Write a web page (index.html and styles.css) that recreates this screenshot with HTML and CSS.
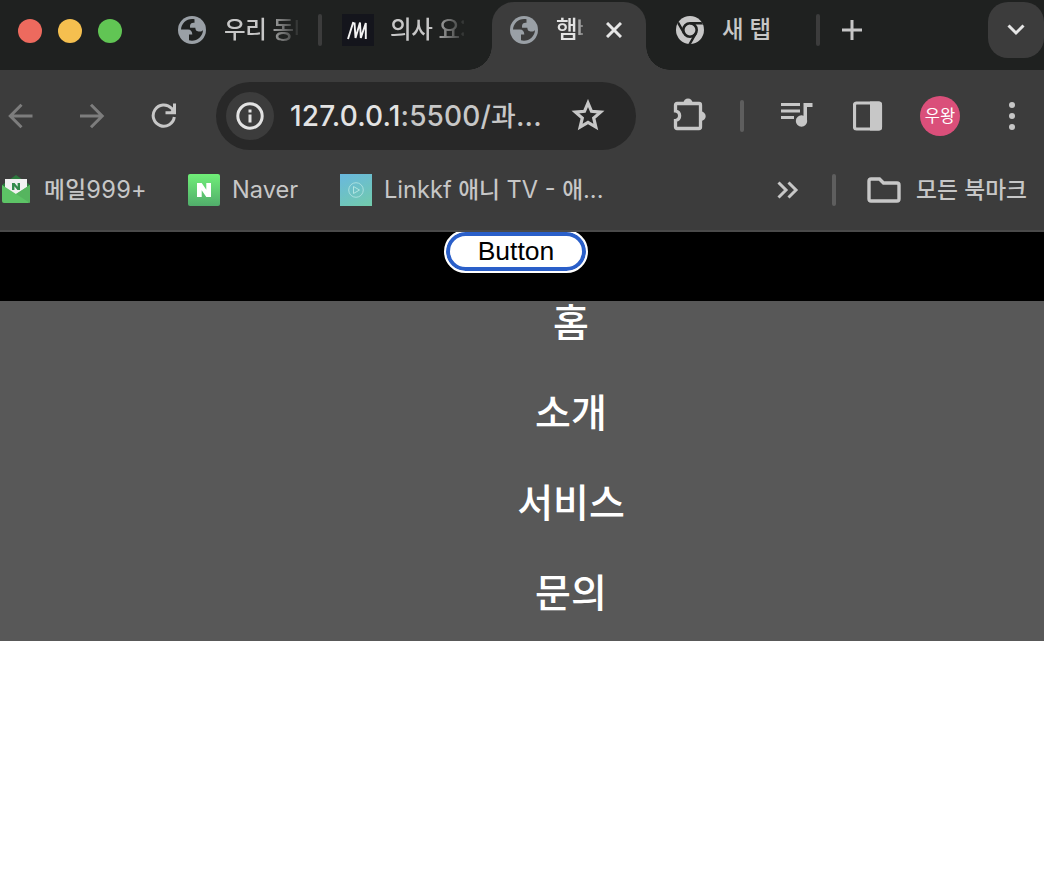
FILE: index.html
```html
<!DOCTYPE html>
<html lang="ko">
<head>
<meta charset="utf-8">
<title>햄버거 메뉴</title>
<link rel="stylesheet" href="styles.css">
</head>
<body>
<svg class="defs" width="0" height="0">
  <symbol id="globe" viewBox="0 0 28 28">
    <circle cx="14" cy="14" r="14" fill="#9aa0a6"/>
    <path d="M16.500 3.200C9.300 1.800 3.300 7 3 13.500h7c2.800 0 4.300 2 4.300 5H11v5.800c6.500 2 13.800-3 14-10.300-1 1.400-2.400 1.600-4.500 1.400-2.200-.2-3-1.400-3.200-3.700h-5.200c-.3-3.700.8-4.900 4.400-4.900z" fill="currentColor"/>
  </symbol>
</svg>
<header class="browser">
  <div class="tabs">
    <div class="lights"><i class="red"></i><i class="yellow"></i><i class="green"></i></div>
    <div class="tab first">
      <svg width="28" height="28"><use href="#globe"/></svg>
      <span class="title fade">우리 동네</span>
    </div>
    <i class="divider"></i>
    <div class="tab second">
      <svg width="32" height="32" viewBox="0 0 32 32"><path fill="#14151c" d="M0 0h32v32H0z"/><path d="M6 25L11.300 8M12.500 8.500L13.500 24L18 8.500L18.800 24L23.800 9V25" fill="none" stroke="#f4f4f4" stroke-width="1.900"/></svg>
      <span class="title fade">의사 요:</span>
    </div>
    <div class="tab active">
      <svg width="28" height="28"><use href="#globe"/></svg>
      <span class="title fade">햄버</span>
      <svg class="close" width="16" height="16" viewBox="0 0 16 16"><path d="M1 1l14 14M15 1L1 15" stroke="#e6e6e6" stroke-width="3"/></svg>
    </div>
    <div class="tab last">
      <svg width="28" height="28" viewBox="0 0 28 28"><defs><clipPath id="disc"><circle cx="14" cy="14" r="14"/></clipPath></defs><g clip-path="url(#disc)"><path d="M0 0h28v28H0z" fill="#c7c7c7"/><circle cx="14" cy="14" r="6.700" fill="none" stroke="#1f2120" stroke-width="2.600"/><path d="M14 7.300h14M8.200 17.400L1.200 5.200M19.800 17.400L13.400 28.500" stroke="#1f2120" stroke-width="2.400"/></g></svg>
      <span class="title">새 탭</span>
    </div>
    <i class="divider"></i>
    <svg class="plus" width="20" height="20" viewBox="0 0 20 20"><path d="M10 0v20M0 10h20" stroke="#c7c7c7" stroke-width="3"/></svg>
    <div class="tab-search"><svg width="18" height="12" viewBox="0 0 18 12"><path d="M1.500 1.500L9 9l7.500-7.500" fill="none" stroke="#e6e6e6" stroke-width="3"/></svg></div>
  </div>
  <div class="toolbar">
    <svg class="back" width="26" height="26" viewBox="0 0 26 26"><path d="M24.500 13H3M13.500 1.800L2.300 13l11.200 11.200" fill="none" stroke="#7d7d7d" stroke-width="3"/></svg>
    <svg class="forward" width="26" height="26" viewBox="0 0 26 26"><path d="M1 13h22M12 1.800L23.200 13 12 24.200" fill="none" stroke="#7d7d7d" stroke-width="3"/></svg>
    <svg class="reload" width="26" height="26" viewBox="0 0 26 26"><path d="M23.300 14A10.600 10.600 0 1 1 20.500 5.300L23 8" fill="none" stroke="#c7c7c7" stroke-width="3"/><path d="M25 .500v10.700H14.500V8.200h5L22 5.500v-5z" fill="#c7c7c7"/></svg>
    <div class="omnibox">
      <div class="info"><svg width="28" height="28" viewBox="0 0 28 28"><circle cx="14" cy="14" r="12.200" fill="none" stroke="#e3e3e3" stroke-width="3"/><path d="M12.500 12.500h3v8h-3zM12.500 7.500h3v3h-3z" fill="#e3e3e3"/></svg></div>
      <span class="url"><b>127.0.0.1</b>:5500/<span class="ko">과</span>...</span>
      <svg class="star" width="34" height="32" viewBox="0 0 34 32"><path d="M17 4l3.500 8.300 9.100.800-6.900 6 2.100 8.900L17 23.300 9.200 28l2.100-8.900-6.900-6 9.100-.800z" fill="none" stroke="#c7c7c7" stroke-width="3.200"/></svg>
    </div>
    <svg class="puzzle" width="34" height="34" viewBox="0 0 34 34"><path d="M4 5.500h22q1.500 0 1.500 1.500v22q0 1.500-1.500 1.500H4q-1.500 0-1.500-1.500v-6.500c5.500-1 5.500-8.500 0-9.500V7q0-1.500 1.500-1.500z" fill="none" stroke="#c7c7c7" stroke-width="3.300"/><path d="M10.500 5a4.500 4.500 0 0 1 9 0zM28 13.500a4.700 4.700 0 0 1 0 9.400z" fill="#c7c7c7"/></svg>
    <i class="divider light"></i>
    <svg class="music" width="32" height="26" viewBox="0 0 32 26"><path d="M0 2.500h19M0 9h19M0 15.500h13" stroke="#c7c7c7" stroke-width="3.200"/><circle cx="20.500" cy="19" r="5.700" fill="#c7c7c7"/><path d="M22.500 19V1H31.500v4H26V19z" fill="#c7c7c7"/></svg>
    <svg class="panel" width="30" height="30" viewBox="0 0 30 30"><rect x="1.500" y="2" width="26" height="26" rx="2" fill="none" stroke="#c7c7c7" stroke-width="3.200"/><path d="M17 .500h9q3 0 3 3v23q0 3-3 3h-9z" fill="#c7c7c7"/></svg>
    <div class="avatar">우왕</div>
    <svg class="dots" width="6" height="28" viewBox="0 0 6 28"><g fill="#c7c7c7"><circle cx="3" cy="3" r="3"/><circle cx="3" cy="14" r="3"/><circle cx="3" cy="25" r="3"/></g></svg>
  </div>
  <nav class="bookmarks">
    <svg class="mail" width="28" height="28" viewBox="0 0 28 28"><path d="M0 10L14 0l14 10v8H0z" fill="#2c7a3d"/><path d="M3 4h22v16H3z" fill="#f1f1f1"/><path d="M0 10l14 9 14-9v16q0 2-2 2H2q-2 0-2-2z" fill="#5dc466"/><path d="M14 19l14 9V10z" fill="#56b55f"/><path d="M10 15V8h2.600l3 3.800V8H18v7h-2.600l-3-3.800V15z" fill="#328b4a"/></svg>
    <span class="label mail-label"><span class="ko">메일</span>999+</span>
    <div class="naver"><svg width="14" height="14" viewBox="0 0 14 14"><path d="M0 14V0h4.700l4.600 6.800V0H14v14H9.300L4.700 7.200V14z" fill="#fff"/></svg></div>
    <span class="label naver-label">Naver</span>
    <div class="linkkf"><svg width="16" height="16" viewBox="0 0 16 16"><circle cx="8" cy="8" r="7.300" fill="none" stroke="#a8dfdf"/><path d="M5.500 4.500v7l6-3.500z" fill="none" stroke="#b2e5e2"/></svg></div>
    <span class="label linkkf-label">Linkkf <span class="ko">애니</span> TV - <span class="ko">애</span>...</span>
    <svg class="more" width="22" height="18" viewBox="0 0 22 18"><path d="M1.500 1.500L9 9l-7.500 7.500M11.500 1.500L19 9l-7.500 7.500" fill="none" stroke="#c7c7c7" stroke-width="3"/></svg>
    <i class="divider light"></i>
    <svg class="folder" width="34" height="26" viewBox="0 0 34 26"><path d="M4 2h8.500l4 4H30q2 0 2 2v14q0 2-2 2H4q-2 0-2-2V4q0-2 2-2z" fill="none" stroke="#c7c7c7" stroke-width="3.400"/></svg>
    <span class="label all-label"><span class="ko">모든 북마크</span></span>
  </nav>
</header>
<main>
  <div class="topbar"><button class="menu-button">Button</button></div>
  <ul class="menu">
    <li>홈</li>
    <li>소개</li>
    <li>서비스</li>
    <li>문의</li>
  </ul>
</main>
</body>
</html>
```
FILE: styles.css
```css
* { box-sizing: border-box; }
body {
  margin: 0;
  background: #fff;
  font-family: Inter, "Noto Sans CJK KR", sans-serif;
  overflow: hidden;
}
svg { display: block; flex: none; }
.defs { display: none; }
.browser {
  height: 232px;
  background: #3c3c3c;
  border-bottom: 2px solid #4a4a4a;
}
.tabs {
  display: flex;
  align-items: center;
  height: 70px;
  padding-bottom: 10px;
  background: #1f2120;
  color: #1f2120;
}
.lights { display: flex; gap: 16px; width: 160px; padding: 2px 0 0 18px; }
.lights i { width: 24px; height: 24px; border-radius: 50%; }
.red { background: #ed6a5e; }
.yellow { background: #f5bf4f; }
.green { background: #61c554; }
.tab { display: flex; align-items: center; height: 60px; }
.first { width: 158px; padding-left: 18px; }
.second { width: 170px; padding-left: 20px; }
.last { width: 170px; padding-left: 30px; }
.title {
  flex: none;
  margin-left: 18px;
  padding-bottom: 4px;
  width: 74px;
  overflow: hidden;
  white-space: nowrap;
  color: #c7c7c7;
  font: 500 23.5px/36px "Noto Sans CJK KR", sans-serif;
  letter-spacing: -0.4px;
}
.second .title { margin-left: 16px; }
.fade {
  -webkit-mask-image: linear-gradient(90deg, #000 55%, transparent 105%);
  mask-image: linear-gradient(90deg, #000 55%, transparent 105%);
}
.divider { flex: none; width: 4px; height: 32px; border-radius: 2px; background: #3c3c3c; }
.divider.light { background: #5e5e5e; }
.active {
  position: relative;
  align-self: flex-start;
  width: 154px;
  height: 68px;
  margin: 2px 0 -10px;
  padding: 0 0 12px 18px;
  border-radius: 22px 22px 0 0;
  background: #3c3c3c;
  color: #3c3c3c;
}
.active::before, .active::after {
  content: "";
  position: absolute;
  bottom: 0;
  width: 24px;
  height: 24px;
}
.active::before { left: -24px; background: radial-gradient(circle at 0 0, transparent 23.5px, #3c3c3c 24px); }
.active::after { right: -24px; background: radial-gradient(circle at 100% 0, transparent 23.5px, #3c3c3c 24px); }
.active .title {
  width: 27px;
  color: #e3e3e3;
  letter-spacing: -1px;
  -webkit-mask-image: linear-gradient(90deg, #000 70%, transparent 115%);
  mask-image: linear-gradient(90deg, #000 70%, transparent 115%);
}
.close { margin-left: 23px; }
.plus { margin-left: 22px; }
.tab-search {
  display: flex;
  align-items: center;
  justify-content: center;
  width: 56px;
  height: 56px;
  margin-left: auto;
  border-radius: 20px;
  background: #3c3c3c;
}
.toolbar { display: flex; align-items: center; height: 92px; padding-left: 8px; }
.forward { margin-left: 45px; }
.reload { margin-left: 46px; }
.omnibox {
  display: flex;
  align-items: center;
  width: 420px;
  height: 68px;
  margin-left: 39px;
  padding-left: 10px;
  border-radius: 34px;
  background: #282828;
}
.info {
  display: flex;
  align-items: center;
  justify-content: center;
  width: 48px;
  height: 48px;
  border-radius: 50%;
  background: #3c3c3c;
}
.url {
  flex: none;
  width: 281px;
  margin-left: 16px;
  color: #c7c7c7;
  font-size: 28px;
  font-weight: 500;
  letter-spacing: 0.15px;
  line-height: 40px;
  white-space: nowrap;
}
.url b { color: #e3e3e3; font-weight: 500; }
.star { margin-bottom: 2px; }
.ko { font-family: "Noto Sans CJK KR", sans-serif; font-size: 0.96em; font-weight: 500; line-height: 1; }
.puzzle { margin: 0 0 3px 37px; }
.puzzle + .divider { margin-left: 33px; }
.music { margin: 0 0 2px 37px; }
.panel { margin-left: 40px; }
.avatar {
  width: 40px;
  height: 40px;
  margin-left: 37px;
  border-radius: 50%;
  background: #da4f7a;
  color: #fff;
  font: 16.5px/38px "Noto Sans CJK KR", sans-serif;
  text-align: center;
}
.dots { margin-left: 49px; }
.bookmarks { display: flex; align-items: center; height: 56px; padding-left: 2px; }
.mail { margin-bottom: 2px; }
.label { flex: none; color: #c7c7c7; font-size: 23.6px; line-height: 36px; white-space: nowrap; }
.mail-label { width: 144px; padding-left: 14px; letter-spacing: 0.3px; }
.naver, .linkkf { display: flex; align-items: center; justify-content: center; width: 32px; height: 32px; margin-left: 14px; }
.naver { border-radius: 2px; background: linear-gradient(#70ef78, #51ad6b); }
.linkkf { margin-left: 0; background: linear-gradient(155deg, #69b8df, #72cbab); }
.naver-label { width: 120px; padding-left: 12px; }
.linkkf-label { width: 405px; padding-left: 12px; }
.more + .divider { margin-left: 33px; }
.folder { margin-left: 31px; }
.all-label { margin-left: 15px; font-size: 23.7px; }
.topbar { height: 69px; background: #000; text-align: center; overflow: hidden; }
.menu-button {
  display: block;
  width: 144px;
  height: 43px;
  margin: -2px 0 0 444px;
  padding: 0 0 1px;
  border: 2px solid #fff;
  border-radius: 22px;
  background: #fff;
  box-shadow: inset 0 0 0 4px #2a5fc9;
  color: #000;
  font: 26.5px/34px "Liberation Sans", Arial, sans-serif;
}
.menu {
  height: 340px;
  margin: 0;
  padding: 0 0 0 98px;
  background: #585858;
  color: #fff;
  list-style: none;
  text-align: center;
  font: 500 39px/38px "Noto Sans CJK KR", sans-serif;
}
.menu li { height: 90px; }
```
